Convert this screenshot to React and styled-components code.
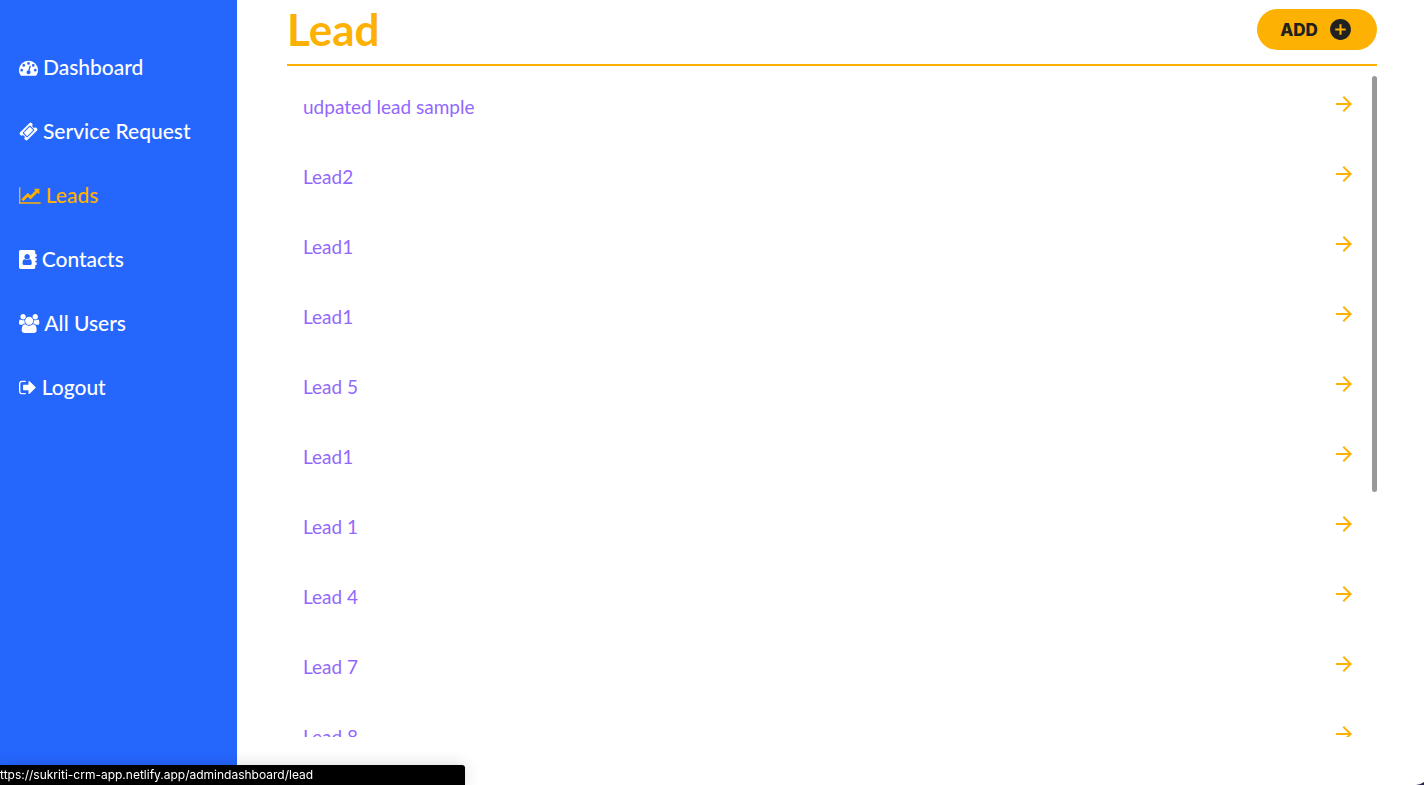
import React from "react";
import styled, { createGlobalStyle } from "styled-components";
import { MdAddCircle, MdArrowForward } from "react-icons/md";

const GlobalStyle = createGlobalStyle`
  *, *::before, *::after { box-sizing: border-box; }
  body { margin: 0; background: #fff; font-family: "Lato", "Open Sans", sans-serif; }
`;

const Page = styled.div`
  display: flex;
  height: 100vh;
  overflow: hidden;
`;

const Sidebar = styled.nav`
  flex: 0 0 237px;
  padding: 35px 19px;
  background: #2566fd;
`;

const NavList = styled.ul`
  list-style: none;
  margin: 0;
  padding: 0;
`;

const NavLink = styled.a`
  display: flex;
  align-items: center;
  gap: 5px;
  height: 64px;
  font-size: 21px;
  font-weight: 500;
  line-height: 24px;
  text-decoration: none;
  white-space: nowrap;
  color: ${(p) => (p.$active ? "#fcb103" : "#fff")};
`;

const NavGlyph = styled.svg`
  flex: none;
  height: 19px;
  overflow: visible;
  fill: currentColor;
  fill-rule: evenodd;
`;

const Main = styled.main`
  flex: 1;
  min-width: 0;
  display: flex;
  flex-direction: column;
  padding: 0 47px 48px 50px;
`;

const Header = styled.header`
  flex: none;
  display: flex;
  align-items: center;
  justify-content: space-between;
  height: 66px;
  padding-bottom: 5px;
  border-bottom: 2px solid #fcb103;
`;

const Title = styled.h1`
  margin: 0;
  padding-bottom: 2px;
  font-size: 44px;
  line-height: 56px;
  font-weight: 700;
  color: #fcb103;
`;

const AddButton = styled.button`
  display: flex;
  align-items: center;
  justify-content: center;
  gap: 10px;
  width: 120px;
  height: 41px;
  padding: 0 1px 0 0;
  border: 0;
  border-radius: 21px;
  background: #fcb103;
  color: #212121;
  font-family: "Inter", "Open Sans", sans-serif;
  font-size: 17px;
  font-weight: 800;
`;

const ListPane = styled.section`
  position: relative;
  flex: 1;
  min-height: 0;
  display: flex;
  margin-top: 10px;
`;

const Scroller = styled.div`
  flex: 1;
  padding-right: 5px;
  overflow-y: auto;
  scrollbar-width: none;
`;

const ScrollThumb = styled.div`
  position: absolute;
  top: 0;
  right: 0;
  width: 5px;
  height: 63%;
  border-radius: 3px;
  background: #999;
`;

const LeadList = styled.ul`
  list-style: none;
  margin: 0;
  padding: 0;
`;

const LeadRow = styled.li`
  display: flex;
  justify-content: space-between;
  height: 70px;
  padding: 16px;
`;

const LeadName = styled.span`
  font-size: 19px;
  line-height: 30px;
  color: #9168fd;
`;

const OpenLink = styled.a`
  height: 24px;
  color: #fcb103;
`;

const StatusBar = styled.div`
  position: fixed;
  left: 0;
  bottom: 0;
  width: 465px;
  height: 20px;
  border-top-right-radius: 3px;
  background: #000;
  color: #fff;
  font-family: "Inter", sans-serif;
  font-size: 12px;
  line-height: 20px;
  box-shadow: 0 0 16px rgba(0, 0, 0, 0.16);
`;

const Corner = styled.svg`
  position: fixed;
  right: 0;
  bottom: 0;
`;

const dot = (x, y) => `M${x} ${y}a128 128 0 1 0 -256 0a128 128 0 1 0 256 0z`;

const ICONS = {
  gauge: {
    width: 1792,
    d: [
      dot(384, 1152), dot(576, 704), dot(1024, 512), dot(1472, 704), dot(1664, 1152),
      "M1004 1185l101-382q6-26-7.500-48.500t-38.500-29.500-48 6.500-30 39.500l-101 382q-60 5-107 43.500t-63 98.500q-20 77 20 146t117 89 146-20 89-117q16-60-6-117t-72-91z",
      "M1792 1152q0 261-141 483-19 29-54 29h-1402q-35 0-54-29-141-221-141-483 0-182 71-348t191-286 286-191 348-71 348 71 286 191 191 286 71 348z",
    ].join(""),
  },
  ticket: {
    width: 1792,
    d: "M1024 452l316 316-572 572-316-316zm-211 979l618-618q19-19 19-45t-19-45l-362-362q-18-18-45-18t-45 18l-618 618q-19 19-19 45t19 45l362 362q18 18 45 18t45-18zm889-637l-907 908q-37 37-90.500 37t-90.500-37l-126-126q56-56 56-136t-56-136-136-56-136 56l-125-126q-37-37-37-90.500t37-90.500l907-906q37-37 90.500-37t90.500 37l125 125q-56 56-56 136t56 136 136 56 136-56l126 125q37 37 37 90.500t-37 90.500z",
  },
  chart: {
    width: 2048,
    d: "M2048 1536v128h-2048v-1536h128v1408h1920zm-128-1248v435q0 21-19.500 29.500t-35.500-7.500l-121-121-633 633q-10 10-23 10t-23-10l-233-233-416 416-192-192 585-585q10-10 23-10t23 10l233 233 464-464-121-121q-16-16-7.500-35.500t29.500-19.500h435q14 0 23 9t9 23z",
  },
  book: {
    width: 1664,
    d: "M1028 644q0 107-76.500 183t-183.500 76-183.500-76-76.500-183q0-108 76.500-184t183.500-76 183.500 76 76.500 184zM980 864q46 0 82.500 17t60 47.500 39.500 67 24 81 11.500 82.500 3.500 79q0 67-39.500 118.500t-105.500 51.500h-576q-66 0-105.500-51.500t-39.500-118.500q0-48 4.500-93.500t18.500-98.500 36.500-91.500 63-64.500 93.500-26h5q7 4 32 19.500t35.500 21 33 17 37 16 35 9 39.500 4.500 39.500-4.500 35-9 37-16 33-17 35.500-21 32-19.500zM1664 608q0 13-9.500 22.500t-22.500 9.500h-96v128h96q13 0 22.500 9.500t9.500 22.500v192q0 13-9.500 22.500t-22.500 9.500h-96v128h96q13 0 22.500 9.500t9.500 22.500v192q0 13-9.500 22.500t-22.500 9.500h-96v224q0 66-47 113t-113 47h-1216q-66 0-113-47t-47-113v-1472q0-66 47-113t113-47h1216q66 0 113 47t47 113v224h96q13 0 22.500 9.500t9.500 22.500z",
  },
  group: {
    width: 1920,
    d: "M593 896q-162 5-265 128h-134q-82 0-138-40.500t-56-118.500q0-353 124-353 6 0 43.500 21t97.500 42.500 119 21.500q67 0 133-23-5 37-5 66 0 139 81 256zm1071 637q0 120-73 189.500t-194 69.500h-874q-121 0-194-69.500t-73-189.500q0-53 3.500-103.500t14-109 26.500-108.500 43-97.500 62-81 85.500-53.500 111.500-20q10 0 43 21.500t73 48 107 48 135 21.500 135-21.500 107-48 73-48 43-21.500q61 0 111.500 20t85.500 53.500 62 81 43 97.500 26.500 108.500 14 109 3.500 103.500zm-1024-1277q0 106-75 181t-181 75-181-75-75-181 75-181 181-75 181 75 75 181zm704 384q0 159-112.500 271.500t-271.500 112.500-271.500-112.500-112.500-271.500 112.500-271.500 271.500-112.500 271.500 112.500 112.500 271.500zm576 225q0 78-56 118.500t-138 40.500h-134q-103-123-265-128 81-117 81-256 0-29-5-66 66 23 133 23 59 0 119-21.500t97.500-42.500 43.500-21q124 0 124 353zm-128-609q0 106-75 181t-181 75-181-75-75-181 75-181 181-75 181 75 75 181z",
  },
  exit: {
    width: 1664,
    d: "M640 1440q0 4 1 20t.5 26.500-3 23.500-10 19.500-20.500 6.500h-320q-119 0-203.500-84.500t-84.500-203.500v-704q0-119 84.500-203.500t203.500-84.500h320q13 0 22.500 9.500t9.500 22.500q0 4 1 20t.5 26.500-3 23.500-10 19.500-20.500 6.500h-320q-66 0-113 47t-47 113v704q0 66 47 113t113 47h312l11.500 1 11.500 3 8 5.500 7 9 2 13.500zM1568 896q0 26-19 45l-544 544q-19 19-45 19t-45-19-19-45v-288h-448q-26 0-45-19t-19-45v-384q0-26 19-45t45-19h448v-288q0-26 19-45t45-19 45 19l544 544q19 19 19 45z",
  },
};

const NAV = [
  { label: "Dashboard", icon: "gauge" },
  { label: "Service Request", icon: "ticket" },
  { label: "Leads", icon: "chart", active: true },
  { label: "Contacts", icon: "book" },
  { label: "All Users", icon: "group" },
  { label: "Logout", icon: "exit" },
];

const LEADS = [
  "udpated lead sample", "Lead2", "Lead1", "Lead1", "Lead 5",
  "Lead1", "Lead 1", "Lead 4", "Lead 7", "Lead 8",
];

function NavIcon({ name }) {
  const { width, d } = ICONS[name];
  return (
    <NavGlyph viewBox={`0 0 ${width} 1792`} aria-hidden="true">
      <path d={d} />
    </NavGlyph>
  );
}

export default function App() {
  return (
    <>
      <GlobalStyle />
      <Page>
        <Sidebar>
          <NavList>
            {NAV.map(({ label, icon, active }) => (
              <li key={label}>
                <NavLink href="#" $active={active}>
                  <NavIcon name={icon} />
                  {label}
                </NavLink>
              </li>
            ))}
          </NavList>
        </Sidebar>
        <Main>
          <Header>
            <Title>Lead</Title>
            <AddButton type="button">
              ADD
              <MdAddCircle size={25} />
            </AddButton>
          </Header>
          <ListPane>
            <Scroller>
              <LeadList>
                {LEADS.map((name, i) => (
                  <LeadRow key={i}>
                    <LeadName>{name}</LeadName>
                    <OpenLink href="#" aria-label={`Open ${name}`}>
                      <MdArrowForward size={24} />
                    </OpenLink>
                  </LeadRow>
                ))}
              </LeadList>
            </Scroller>
            <ScrollThumb />
          </ListPane>
        </Main>
      </Page>
      <StatusBar>ttps://sukriti-crm-app.netlify.app/admindashboard/lead</StatusBar>
      <Corner width="8" height="3" viewBox="0 0 8 3" aria-hidden="true">
        <path d="M0 3Q5 2.500 8 0V3Z" fill="#2b2350" />
      </Corner>
    </>
  );
}
